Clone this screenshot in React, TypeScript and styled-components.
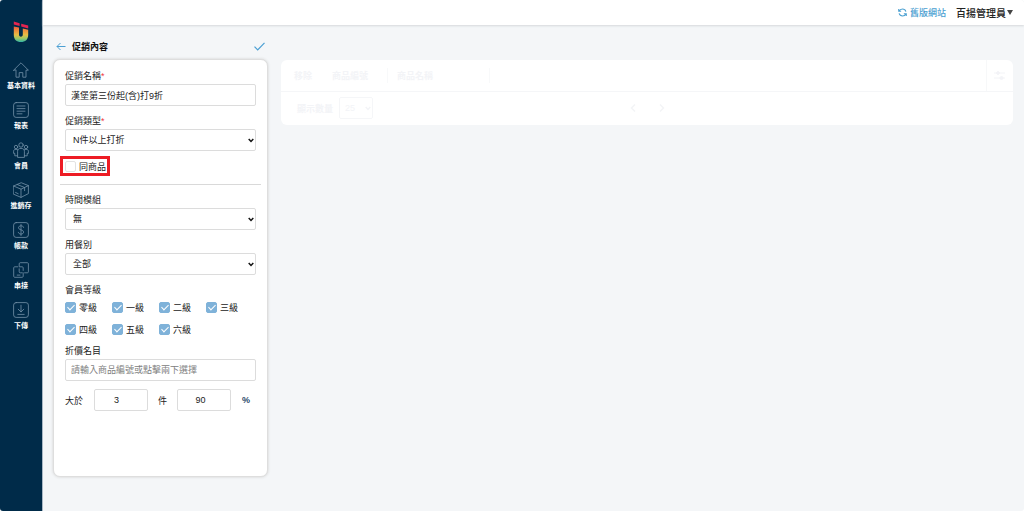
import React from 'react';
import styled, { createGlobalStyle } from 'styled-components';

const GlobalStyle = createGlobalStyle`
  *, *::before, *::after { box-sizing: border-box; }
  body { margin: 0; background: #ffffff; }
  body, input, select, button {
    font-family: "Liberation Sans", "Noto Sans CJK TC", sans-serif;
    font-size: 9px;
    color: #222222;
  }
`;

const Shell = styled.div`
  display: flex;
  min-height: calc(100vh - 1px);
  margin-bottom: 1px;
  border-radius: 3px;
  overflow: hidden;
  background: #f4f6f8;
`;

const Sidebar = styled.nav`
  flex: 0 0 43px;
  display: flex;
  flex-direction: column;
  align-items: center;
  padding-top: 21px;
  background: #002b49;
  border-right: 1px solid #a9b8c5;
`;

const Logo = styled.svg`
  width: 16px;
  height: 22px;
  margin-bottom: 18px;
`;

const NavItem = styled.a`
  display: flex;
  flex-direction: column;
  align-items: center;
  height: 40px;
  padding-top: 1px;
  color: #ffffff;
  font-size: 7px;
  font-weight: 700;
  line-height: 10px;
  white-space: nowrap;
  text-decoration: none;
`;

const NavIcon = styled.svg`
  width: 16px;
  height: 16px;
  margin-bottom: 3px;
  fill: none;
  stroke: #7593a9;
  stroke-width: 0.8;
  stroke-linecap: round;
  stroke-linejoin: round;
`;

const Page = styled.div`
  flex: 1;
  min-width: 0;
`;

const TopBar = styled.header`
  display: flex;
  align-items: center;
  justify-content: flex-end;
  gap: 10px;
  height: 25px;
  padding-right: 11px;
  background: #ffffff;
  box-shadow: 0 1px 2px #d5d8db;
`;

const OldSiteLink = styled.a`
  display: flex;
  align-items: center;
  gap: 3px;
  color: #4ba0d1;
  font-weight: 500;
  text-decoration: none;
`;

const UserMenu = styled.button`
  display: flex;
  align-items: center;
  gap: 1px;
  padding: 0;
  border: 0;
  background: none;
  font-family: "Noto Sans CJK TC", sans-serif;
  font-size: 10px;
  line-height: 15px;
  font-weight: 500;
`;

const Content = styled.main`
  display: grid;
  grid-template-columns: 215px minmax(0, 1fr);
  column-gap: 13px;
  align-items: start;
  padding: 8px 11px 33px 10px;
`;

const PanelHead = styled.div`
  display: flex;
  align-items: center;
  gap: 6px;
  height: 26px;
  padding: 0 3px;
`;

const IconButton = styled.button`
  display: flex;
  padding: 0;
  border: 0;
  background: none;
  color: inherit;
`;

const Title = styled.h1`
  flex: 1;
  margin: 0;
  font-size: 9px;
  font-weight: 700;
  color: #111111;
`;

const FormCard = styled.form`
  min-height: 418px;
  padding: 9px 6px;
  border: 1px solid #dedede;
  border-radius: 7px;
  background: #ffffff;
  box-shadow: 0 0 3px #cfcfcf;
`;

const Field = styled.div<{ $tight?: boolean }>`
  padding: 0 5px;
  margin-bottom: ${(p) => (p.$tight ? 5 : 8)}px;
`;

const Label = styled.label`
  display: block;
  line-height: 15px;
`;

const Required = styled.span`
  color: #f0383f;
`;

const TextInput = styled.input`
  display: block;
  width: 100%;
  height: 22px;
  padding: 0 5px;
  border: 1px solid #dcdcdc;
  border-radius: 2px;
  background: #ffffff;
  outline: 0;
  &::placeholder { color: #808080; opacity: 1; }
`;

const SelectBox = styled.div`
  position: relative;
  svg {
    position: absolute;
    right: 2px;
    top: 9px;
    pointer-events: none;
  }
`;

const Select = styled.select`
  display: block;
  width: 100%;
  height: 22px;
  padding: 0 7px;
  border: 1px solid #dcdcdc;
  border-radius: 2px;
  background: #ffffff;
  appearance: none;
`;

const Highlight = styled.div`
  width: fit-content;
  display: flex;
  align-items: center;
  height: 20px;
  margin-bottom: 8px;
  padding: 0 1px 0 2px;
  border: 3px solid #ed1c24;
`;

const CheckLabel = styled.label`
  display: flex;
  align-items: center;
  gap: 3px;
  height: 13px;
  white-space: nowrap;
`;

const Checkbox = styled.input`
  position: relative;
  flex: none;
  width: 11px;
  height: 11px;
  margin: 0;
  border: 1px solid #e2e2e2;
  border-radius: 2px;
  background: #ffffff;
  appearance: none;
  &:checked { background: #7fb2d9; border-color: #7fb2d9; }
  &:checked::after {
    content: "";
    position: absolute;
    left: 3px;
    top: 0;
    width: 4px;
    height: 7px;
    border: solid #ffffff;
    border-width: 0 1px 1px 0;
    transform: rotate(45deg);
  }
`;

const Divider = styled.hr`
  height: 1px;
  margin: 0 0 8px;
  border: 0;
  background: #d9d9d9;
`;

const Levels = styled.fieldset`
  margin: 0 0 8px;
  padding: 0 5px;
  border: 0;
  legend { padding: 0; line-height: 15px; }
`;

const LevelGrid = styled.div`
  display: grid;
  grid-template-columns: repeat(4, 1fr);
  row-gap: 9px;
  padding-top: 3px;
  margin-right: 3px;
`;

const RuleRow = styled.div`
  display: flex;
  align-items: center;
  justify-content: space-between;
  padding: 0 11px 0 5px;
`;

const NumberInput = styled(TextInput)`
  width: 54px;
  padding: 0 12px 0 4px;
  text-align: center;
`;

const Percent = styled.span`
  color: #2b4a6b;
  font-weight: 700;
`;

const ListCard = styled.section`
  margin-top: 27px;
  border-radius: 6px;
  background: #ffffff;
  color: #f3f4f7;
  overflow: hidden;
`;

const Table = styled.table`
  width: 100%;
  table-layout: fixed;
  border-collapse: collapse;
`;

const Th = styled.th<{ $w?: number }>`
  width: ${(p) => (p.$w ? `${p.$w}px` : 'auto')};
  height: 31px;
  padding: 0;
  border-bottom: 1px solid #f5f6f8;
  text-align: left;
`;

const Cell = styled.div<{ $pad: number; $line?: boolean }>`
  height: 15px;
  line-height: 17px;
  padding-left: ${(p) => p.$pad}px;
  border-right: ${(p) => (p.$line ? '1px solid #f8f9fa' : '0')};
`;

const ToolTh = styled(Th)`
  border-left: 1px solid #f7f8f9;
  ${IconButton} { margin: 0 auto; }
`;

const Pager = styled.footer`
  display: grid;
  grid-template-columns: 1fr auto 1fr;
  align-items: center;
  height: 33px;
  padding: 0 16px;
`;

const PageSize = styled.label`
  display: flex;
  align-items: center;
  gap: 6px;
  font-weight: 700;
`;

const SizeSelect = styled(Select)`
  width: 34px;
  padding: 0 5px;
  border-color: #f5f6f8;
  color: #f3f4f7;
`;

const Arrows = styled.div`
  display: flex;
  gap: 23px;
`;

const Caret = ({ color = '#111111' }: { color?: string }) => (
  <svg width="6" height="5" viewBox="0 0 6 5" fill="none" stroke={color} strokeWidth="1.5">
    <path d="M.7 1 3 3.4 5.3 1" />
  </svg>
);

const nav: { label: string; icon: React.ReactNode }[] = [
  { label: '基本資料', icon: <path d="M.6 8.2 8 .8l7.4 7.4H13v7H9.8v-4.6H6.2v4.6H3v-7z" /> },
  { label: '報表', icon: <><rect x=".6" y=".6" width="14.8" height="14.8" rx="2.5" /><path d="M4 4h8M4 6.6h8M4 9.2h8M4 11.8h5" /></> },
  { label: '會員', icon: <><circle cx="8" cy="3" r="2.2" /><circle cx="3" cy="5" r="1.7" /><circle cx="13" cy="5" r="1.7" /><path d="M4.600 15V9.200c0-1.800 1.200-2.800 3.400-2.800s3.400 1 3.400 2.800V15zM4.400 13.800H1.800V11.400H.6V9.200c0-1.200.9-1.900 2.400-1.900.7 0 1.300.2 1.700.5M11.600 13.800h2.600v-2.400h1.200V9.200c0-1.200-.9-1.900-2.400-1.900-.7 0-1.300.2-1.700.5" /></> },
  { label: '進銷存', icon: <path d="M.6 4 8.200.7l7.200 2.900v8L8 15.400.6 12.200zM.6 4 8 7.200l7.400-3.600M8 7.200v8.200M4.200 2.500l7.400 3v3.200M2.600 10.500l2.600 1.200" /> },
  { label: '帳款', icon: <><rect x=".6" y=".6" width="14.8" height="14.8" rx="2.5" /><path d="M10.6 5.4C10.4 4.3 9.4 3.8 8 3.8S5.5 4.5 5.5 5.8C5.5 8.500 10.6 7.2 10.6 10c0 1.4-1.2 2.1-2.600 2.1s-2.500-.7-2.700-1.800M8 2.500v11" /></> },
  { label: '串接', icon: <><path d="M6.200 4.800V1.800c0-.6.4-1.100 1-1.100h7.200c.6 0 1 .5 1 1.100v8c0 .6-.4 1-1 1h-2.800" /><path d="M4.600 4.800H1.700c-.6 0-1 .4-1 1v8.500c0 .6.4 1 1 1h7.500c.6 0 1-.4 1-1V10.800M6.200 6.800v3c0 .6.4 1 1 1h2M6.800 4.800h2.400c.6 0 1 .4 1 1v2.600M4.200 13.100h2.800" /></> },
  { label: '下傳', icon: <><rect x=".6" y=".6" width="14.8" height="14.8" rx="2.5" /><path d="M8 3.200v6.600M5.200 7.200 8 10l2.800-2.800M4.800 12.400h6.400" /></> },
];

const levels = ['零級', '一級', '二級', '三級', '四級', '五級', '六級'];

export default function App() {
  return (
    <>
      <GlobalStyle />
      <Shell>
        <Sidebar>
          <Logo viewBox="0 0 16 22">
            <defs>
              <linearGradient id="brand" gradientUnits="userSpaceOnUse" x1="0" y1="3" x2="0" y2="21">
                <stop offset="0" stopColor="#e8304a" />
                <stop offset=".3" stopColor="#f0803a" />
                <stop offset=".6" stopColor="#e8bd45" />
                <stop offset=".8" stopColor="#9cc765" />
                <stop offset="1" stopColor="#2fb3a6" />
              </linearGradient>
            </defs>
            <path d="M.8 5.400 6 6.600v6.900c0 1.400.6 2.200 1.900 2.200s1.900-.8 1.900-2.200V7.500l5.400 1.200v5.100c0 4.700-2.900 7.300-7.300 7.300S.8 18.500.8 13.800z" fill="url(#brand)" />
            <path d="M.8.5 6.600 2.200v2.900L.8 3.600zM8.200 2.700l7 1.900v2.800L8.200 5.600z" fill="#e42450" />
          </Logo>
          {nav.map((n) => (
            <NavItem href="#" key={n.label}>
              <NavIcon viewBox="0 0 16 16">{n.icon}</NavIcon>
              {n.label}
            </NavItem>
          ))}
        </Sidebar>
        <Page>
          <TopBar>
            <OldSiteLink href="#">
              <svg width="9" height="9" viewBox="0 0 10 10" fill="none" stroke="currentColor" strokeWidth="1.200">
                <path d="M.8 1v2.700h2.700M9.200 9V6.300H6.500M1 3.700C2 1.800 3.300 1.200 5 1.200c1.800 0 3.200 1 3.800 2.800M9 6.300C8 8.200 6.700 8.800 5 8.800 3.200 8.800 1.800 7.800 1.200 6" />
              </svg>
              舊版網站
            </OldSiteLink>
            <UserMenu type="button">
              百揚管理員
              <svg width="6" height="5" viewBox="0 0 6 5" fill="#444444"><path d="M0 0h6L3 5z" /></svg>
            </UserMenu>
          </TopBar>
          <Content>
            <div>
              <PanelHead>
                <IconButton type="button" aria-label="返回">
                  <svg width="10" height="9" viewBox="0 0 10 9" fill="none" stroke="#4b9fd3" strokeWidth="1">
                    <path d="M9.500 4.500H1M4.500 1 1 4.500 4.500 8" />
                  </svg>
                </IconButton>
                <Title>促銷內容</Title>
                <IconButton type="button" aria-label="儲存">
                  <svg width="11" height="9" viewBox="0 0 11 9" fill="none" stroke="#4b9fd3" strokeWidth="1.200">
                    <path d="M.5 4.700 3.700 8 10.500.800" />
                  </svg>
                </IconButton>
              </PanelHead>
              <FormCard>
                <Field>
                  <Label htmlFor="name">促銷名稱<Required>*</Required></Label>
                  <TextInput id="name" defaultValue="漢堡第三份起(含)打9折" />
                </Field>
                <Field $tight>
                  <Label htmlFor="type">促銷類型<Required>*</Required></Label>
                  <SelectBox>
                    <Select id="type"><option>N件以上打折</option></Select>
                    <Caret />
                  </SelectBox>
                </Field>
                <Highlight>
                  <CheckLabel><Checkbox type="checkbox" />同商品</CheckLabel>
                </Highlight>
                <Divider />
                <Field>
                  <Label htmlFor="time">時間模組</Label>
                  <SelectBox>
                    <Select id="time"><option>無</option></Select>
                    <Caret />
                  </SelectBox>
                </Field>
                <Field>
                  <Label htmlFor="dining">用餐別</Label>
                  <SelectBox>
                    <Select id="dining"><option>全部</option></Select>
                    <Caret />
                  </SelectBox>
                </Field>
                <Levels>
                  <legend>會員等級</legend>
                  <LevelGrid>
                    {levels.map((l) => (
                      <CheckLabel key={l}><Checkbox type="checkbox" defaultChecked />{l}</CheckLabel>
                    ))}
                  </LevelGrid>
                </Levels>
                <Field>
                  <Label htmlFor="item">折價名目</Label>
                  <TextInput id="item" placeholder="請輸入商品編號或點擊兩下選擇" />
                </Field>
                <RuleRow>
                  <label htmlFor="count">大於</label>
                  <NumberInput id="count" defaultValue="3" />
                  <label htmlFor="rate">件</label>
                  <NumberInput id="rate" defaultValue="90" />
                  <Percent>%</Percent>
                </RuleRow>
              </FormCard>
            </div>
            <ListCard>
              <Table>
                <thead>
                  <tr>
                    <Th $w={38}><Cell $pad={13}>移除</Cell></Th>
                    <Th $w={69}><Cell $pad={13} $line>商品編號</Cell></Th>
                    <Th $w={102}><Cell $pad={9} $line>商品名稱</Cell></Th>
                    <Th />
                    <ToolTh $w={27}>
                      <IconButton type="button" aria-label="欄位設定">
                        <svg width="11" height="9" viewBox="0 0 11 9" fill="currentColor" stroke="currentColor">
                          <path d="M0 2h11M0 7h11" />
                          <circle cx="4" cy="2" r="1.500" />
                          <circle cx="7.500" cy="7" r="1.500" />
                        </svg>
                      </IconButton>
                    </ToolTh>
                  </tr>
                </thead>
              </Table>
              <Pager>
                <PageSize>
                  顯示數量
                  <SelectBox>
                    <SizeSelect><option>25</option></SizeSelect>
                    <Caret color="#f3f4f7" />
                  </SelectBox>
                </PageSize>
                <Arrows>
                  <IconButton type="button" aria-label="上一頁">
                    <svg width="6" height="8" viewBox="0 0 6 8" fill="none" stroke="currentColor" strokeWidth="1.500"><path d="M5 .5 1.500 4 5 7.500" /></svg>
                  </IconButton>
                  <IconButton type="button" aria-label="下一頁">
                    <svg width="6" height="8" viewBox="0 0 6 8" fill="none" stroke="currentColor" strokeWidth="1.500"><path d="M1 .5 4.500 4 1 7.500" /></svg>
                  </IconButton>
                </Arrows>
              </Pager>
            </ListCard>
          </Content>
        </Page>
      </Shell>
    </>
  );
}
